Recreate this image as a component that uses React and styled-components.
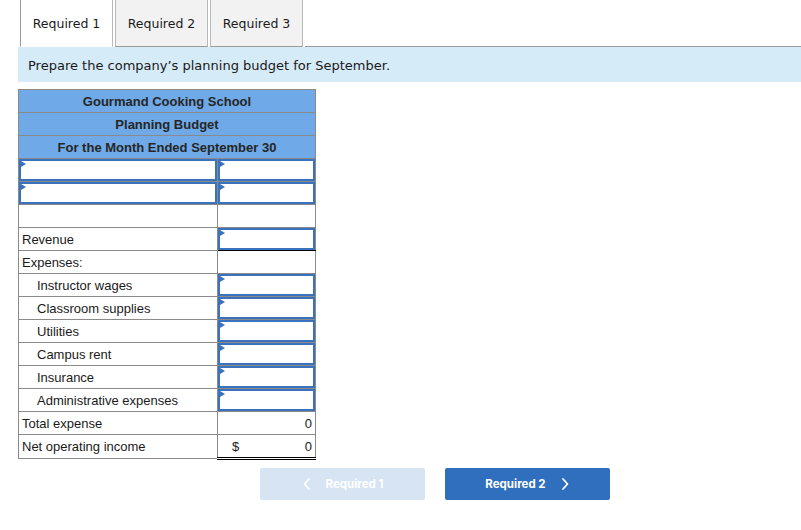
import React from 'react';
import styled, { createGlobalStyle } from 'styled-components';

const GlobalStyle = createGlobalStyle`
    body {
        margin: 0;
        background: #ffffff;
        font-family: "Liberation Sans", Arial, sans-serif;
    }
`;

const rows = [
    { label: '', input: true, labelInput: true },
    { label: '', input: true, labelInput: true },
    { label: '' },
    { label: 'Revenue', input: true, underline: true },
    { label: 'Expenses:' },
    { label: 'Instructor wages', indent: true, input: true },
    { label: 'Classroom supplies', indent: true, input: true },
    { label: 'Utilities', indent: true, input: true },
    { label: 'Campus rent', indent: true, input: true },
    { label: 'Insurance', indent: true, input: true },
    { label: 'Administrative expenses', indent: true, input: true },
    { label: 'Total expense', value: '0' },
    { label: 'Net operating income', value: '0', dollar: true, total: true },
];

export default function App() {
    return (
        <>
            <GlobalStyle />
            <Page>
                <Tabs>
                    <Tab $active>Required 1</Tab>
                    <Tab>Required 2</Tab>
                    <Tab>Required 3</Tab>
                    <TabFill />
                </Tabs>
                <Instruction>Prepare the company’s planning budget for September.</Instruction>

                <Budget>
                    <colgroup>
                        <col style={{ width: 199 }} />
                        <col style={{ width: 98 }} />
                    </colgroup>
                    <tbody>
                        <tr><HeadCell colSpan={2}>Gourmand Cooking School</HeadCell></tr>
                        <tr><HeadCell colSpan={2}>Planning Budget</HeadCell></tr>
                        <tr><HeadCell colSpan={2}>For the Month Ended September 30</HeadCell></tr>
                        {rows.map((r, i) => (
                            <tr key={i}>
                                {r.labelInput ? (
                                    <InputCell><InputBox /></InputCell>
                                ) : (
                                    <LabelCell $indent={r.indent}>{r.label}</LabelCell>
                                )}
                                {r.input ? (
                                    <InputCell $underline={r.underline}><InputBox /></InputCell>
                                ) : (
                                    <ValueCell $total={r.total}>
                                        {r.dollar && <Dollar>$</Dollar>}
                                        {r.value}
                                    </ValueCell>
                                )}
                            </tr>
                        ))}
                    </tbody>
                </Budget>

                <Nav>
                    <NavButton disabled>
                        <Chevron viewBox="0 0 10 14"><path d="M7 2 L2.5 7 L7 12" /></Chevron>
                        Required 1
                    </NavButton>
                    <NavButton $primary>
                        Required 2
                        <Chevron viewBox="0 0 10 14"><path d="M3 2 L7.5 7 L3 12" /></Chevron>
                    </NavButton>
                </Nav>
            </Page>
        </>
    );
}

const Page = styled.div`
    padding-left: 18px;
    width: 783px;
`;

const Tabs = styled.div`
    display: flex;
    height: 47px;
`;

const Tab = styled.div`
    width: 91px;
    height: 46px;
    margin-left: ${p => (p.$active ? '2px' : '0')};
    margin-right: 2px;
    display: flex;
    align-items: center;
    justify-content: center;
    font-family: Verdana, "DejaVu Sans", sans-serif;
    font-size: 12.5px;
    color: #1a1a1a;
    background: ${p => (p.$active ? '#ffffff' : '#f2f2f2')};
    border: 1px solid ${p => (p.$active ? '#9a9a9a' : '#b8b8b8')};
    border-top: none;
    border-bottom: ${p => (p.$active ? '1px solid #ffffff' : '1px solid #9a9a9a')};
    ${p => p.$active && 'border-right-color: #b8b8b8;'}
`;

const TabFill = styled.div`
    flex: 1;
    border-bottom: 1px solid #9a9a9a;
`;

const Instruction = styled.div`
    height: 35px;
    background: #d6ebf8;
    display: flex;
    align-items: center;
    padding-left: 10px;
    padding-top: 1px;
    box-sizing: border-box;
    font-family: Verdana, "DejaVu Sans", sans-serif;
    font-size: 13px;
    color: #1a1a1a;
`;

const Budget = styled.table`
    margin-top: 7px;
    border-collapse: collapse;
    width: 297px;
    table-layout: fixed;
    font-family: "Liberation Sans", Arial, sans-serif;
    font-size: 13px;
    color: #1a1a1a;

    td {
        height: 22px;
        padding: 0;
        border: 1px solid #8a8a8a;
        white-space: nowrap;
    }
`;

const HeadCell = styled.td`
    background: #6fa9e7;
    text-align: center;
    font-weight: bold;
    color: #262626;
`;

const LabelCell = styled.td`
    padding-left: ${p => (p.$indent ? '18px' : '3px')} !important;
`;

const ValueCell = styled.td`
    text-align: right;
    padding-right: 3px !important;
    position: relative;
    ${p => p.$total && `
        border-top: 1px solid #000 !important;
        border-bottom: 3px double #000 !important;
    `}
`;

const Dollar = styled.span`
    position: absolute;
    left: 14px;
`;

const InputCell = styled.td`
    position: relative;
    ${p => p.$underline && 'border-bottom: 1px solid #000 !important;'}
`;

const InputBox = styled.div`
    position: absolute;
    inset: 0;
    border: 2px solid #3a72bd;
    background: #ffffff;

    &::before {
        content: '';
        position: absolute;
        top: 0;
        left: 0;
        border-top: 3px solid transparent;
        border-bottom: 3px solid transparent;
        border-left: 5px solid #3a72bd;
    }
`;

const Nav = styled.div`
    display: flex;
    gap: 20px;
    padding-left: 242px;
    margin-top: 8px;
`;

const NavButton = styled.button`
    width: 165px;
    height: 32px;
    border: none;
    border-radius: 2px;
    display: flex;
    align-items: center;
    justify-content: center;
    gap: 14px;
    font-family: Inter, "Liberation Sans", sans-serif;
    font-weight: 700;
    font-size: 11.5px;
    color: #ffffff;
    background: ${p => (p.$primary ? '#2f6fbe' : '#d6e4f3')};
    cursor: pointer;
    padding: 0;
`;

const Chevron = styled.svg`
    width: 10px;
    height: 14px;
    fill: none;
    stroke: #ffffff;
    stroke-width: 1.8;
    stroke-linecap: round;
    stroke-linejoin: round;
`;
